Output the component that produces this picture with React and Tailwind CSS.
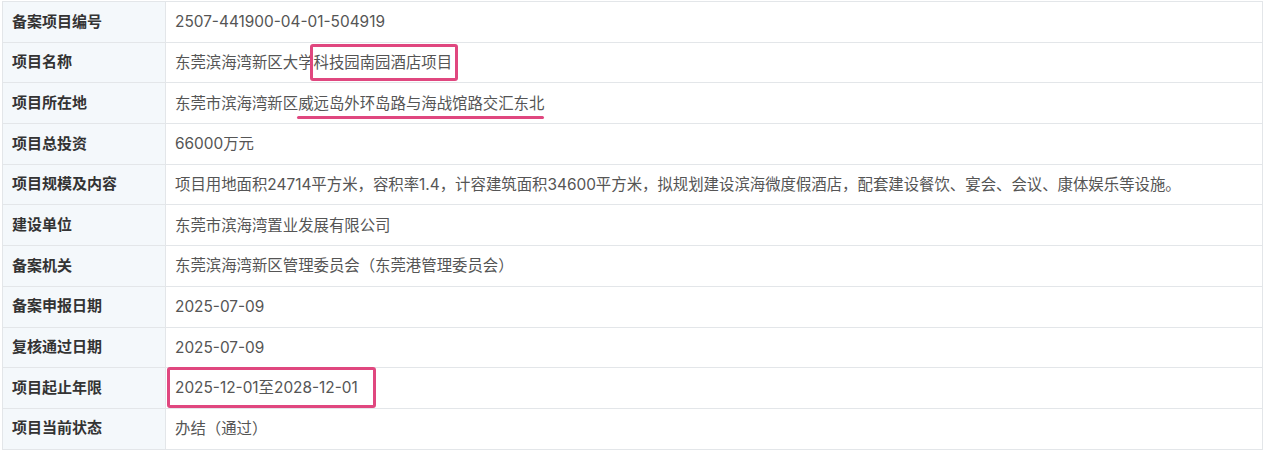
import React from 'react';

const rows = [
  { label: '备案项目编号', value: '2507-441900-04-01-504919' },
  { label: '项目名称', value: 'name' },
  { label: '项目所在地', value: 'addr' },
  { label: '项目总投资', value: '66000万元' },
  {
    label: '项目规模及内容',
    value:
      '项目用地面积24714平方米，容积率1.4，计容建筑面积34600平方米，拟规划建设滨海微度假酒店，配套建设餐饮、宴会、会议、康体娱乐等设施。',
  },
  { label: '建设单位', value: '东莞市滨海湾置业发展有限公司' },
  { label: '备案机关', value: '东莞滨海湾新区管理委员会（东莞港管理委员会）' },
  { label: '备案申报日期', value: '2025-07-09' },
  { label: '复核通过日期', value: '2025-07-09' },
  { label: '项目起止年限', value: 'period' },
  { label: '项目当前状态', value: '办结（通过）' },
];

// pink annotation marks sit over the text
const renderValue = (v) => {
  if (v === 'name') {
    return (
      <>
        东莞滨海湾新区大学
        <span className="relative">
          科技园南园酒店项目
          <span className="absolute -left-[4px] -right-[6px] -top-[9px] -bottom-[9px] border-[3px] border-[#e0477f] rounded-[3px]"></span>
        </span>
      </>
    );
  }
  if (v === 'addr') {
    return (
      <>
        东莞市滨海湾新区
        <span className="relative">
          威远岛外环岛路与海战馆路交汇东北
          <span className="absolute -left-[1px] right-0 -bottom-[6px] h-[3px] rounded-full bg-[#e0477f]"></span>
        </span>
      </>
    );
  }
  if (v === 'period') {
    return (
      <span className="relative">
        2025-12-01至2028-12-01
        <span className="absolute -left-[8px] -right-[18px] -top-[11px] -bottom-[11px] border-[3px] border-[#e0477f] rounded-[3px]"></span>
      </span>
    );
  }
  return v;
};

export default function App() {
  return (
    <div
      className="bg-white w-[1265px] h-[450px] pt-px pl-[2px]"
      style={{ fontFamily: 'Inter, "Noto Sans CJK SC", sans-serif' }}
    >
      <div className="w-[1261px] border-t border-l border-r border-[#e3e6e9]">
        {rows.map((r) => (
          <div key={r.label} className="flex h-[40.7px] border-b border-[#e3e6e9]">
            <div className="w-[163px] shrink-0 bg-[#f4f8fb] border-r border-[#e3e6e9] pl-[9px] flex items-center text-[15px] font-bold text-[#333]">
              {r.label}
            </div>
            <div className="flex-1 pl-[9px] flex items-center text-[15.4px] text-[#555]">
              <span className="whitespace-nowrap">{renderValue(r.value)}</span>
            </div>
          </div>
        ))}
      </div>
    </div>
  );
}
